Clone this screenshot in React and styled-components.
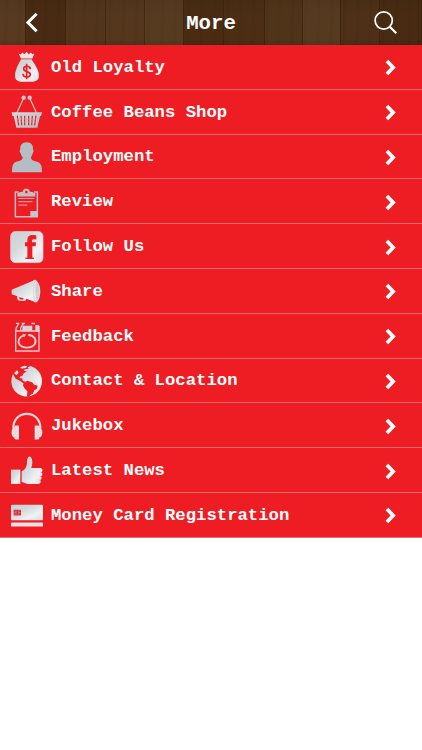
import React from 'react'
import styled, { createGlobalStyle } from 'styled-components'

const GlobalStyle = createGlobalStyle`
  body {
    margin: 0;
    background-color: #fff;
    font-family: 'Liberation Mono', monospace;
  }
`

const Screen = styled.div`
  width: 100%;
  min-height: 750px;
  background-color: #fff;
`

const Header = styled.header`
  display: grid;
  grid-template-columns: 62px 1fr 62px;
  align-items: center;
  height: 45px;
  background:
    linear-gradient(rgba(0, 0, 0, 0.05), transparent 30%, transparent 85%, rgba(0, 0, 0, 0.08)),
    repeating-linear-gradient(92deg, transparent 0 4px, rgba(0, 0, 0, 0.04) 7px, transparent 10px 13px),
    linear-gradient(
      90deg,
      #573a20 0 25px,
      #40240e 25px 26px, #482b12 26px 65px,
      #40240e 65px 66px, #52351b 66px 105px,
      #442910 105px 106px, #54371d 106px 144px,
      #442910 144px 145px, #573b20 145px 183px,
      #40240e 183px 184px, #4a2c13 184px 223px,
      #40240e 223px 224px, #4b2e14 224px 264px,
      #40240e 264px 265px, #50341a 265px 302px,
      #442910 302px 303px, #563a20 303px 340px,
      #40240e 340px 341px, #4d3017 341px 379px,
      #40240e 379px 380px, #482b12 380px 418px,
      #40240e 418px 419px, #482b12 419px
    );
`

const Title = styled.h1`
  margin: 3px 0 0;
  color: #fff;
  text-align: center;
  font-size: 20.7px;
  font-weight: 700;
  line-height: 24px;
`

const HeaderButton = styled.button`
  display: flex;
  justify-content: ${({ $end }) => ($end ? 'flex-end' : 'flex-start')};
  padding: 0 24px;
  border: 0;
  background: none;
  color: #fff;

  svg {
    flex: none;
  }
`

const Menu = styled.ul`
  margin: 0;
  padding: 0;
  list-style: none;
  background-color: #ee1d23;
`

const MenuItem = styled.li`
  display: flex;
  align-items: center;
  box-sizing: border-box;
  height: 44.8px;
  padding: 0 25px 0 10px;
  border-bottom: 1px solid #f5686b;
  cursor: pointer;
`

const Icon = styled.svg`
  flex: none;
  width: 34px;
  height: 36px;
  margin-top: 1px;
`

const Label = styled.span`
  flex: 1;
  margin: 2px 0 0 7px;
  color: #fff;
  font-size: 17.27px;
  font-weight: 700;
  line-height: 20px;
  white-space: nowrap;
`

const Chevron = styled.svg`
  flex: none;
  width: 12px;
  height: 17px;
  margin-top: 2px;
`

const Palette = styled.svg`
  display: block;
  width: 0;
  height: 0;
`

const RED = '#ee1d23'

const items = [
  {
    name: 'Old Loyalty',
    top: 15.6,
    icon: <>
      <path d="M56 29l6 3 5-6 6 5 7-7 6 7 7-5 4 5 6-2-6 15H63z" fill="#e8e4e6" />
      <path d="M63 46h32c3 8 22 29 22 50 0 12-9 18-24 18H69c-16 0-24-6-24-18 0-21 15-42 18-50z" fill="url(#silver)" />
      <path d="M91 76c0-12-20-11-20-1 0 11 20 6 20 17 0 11-22 10-22-2M80 60v46" fill="none" stroke={RED} strokeWidth="5" />
    </>,
  },
  {
    name: 'Coffee Beans Shop',
    top: 150,
    icon: <>
      <path d="M71 162L50 208M89 162l21 46" stroke="#d8c9cf" strokeWidth="3.4" />
      <circle cx="71" cy="161" r="6.5" fill="#c3c8cd" />
      <circle cx="89" cy="161" r="6.5" fill="#c3c8cd" />
      <path d="M35 205h91l-3 11h-3l-8 35H49l-8-35h-4z" fill="url(#steel)" />
      <path d="M52 215l4 29M63 215l2 29M74 215v29M86 215v29M97 215l-2 29M108 215l-4 29" stroke={RED} strokeWidth="3.6" />
      <path d="M48 225h65M50 234h60" stroke="#b9c2c8" strokeWidth="1.4" />
    </>,
  },
  {
    name: 'Employment',
    top: 14.4,
    icon: <path d="M80 24c14 0 20 9 19 22 3 2 2 8-1 11-1 7-4 9-5 12 0 8 5 10 16 13 12 3 17 10 17 32H36c0-22 4-29 15-32 12-3 17-5 17-13-2-3-5-6-6-12-4-3-4-9-1-11-1-13 5-22 19-22z" fill="#b4bdc4" />,
  },
  {
    name: 'Review',
    top: 148.8,
    icon: <>
      <path d="M56 173H46v74h66v-74h-10" fill="none" stroke="#c5bcc2" strokeWidth="4.5" />
      <path d="M52 186v-8c0-5 8-4 17-7 0-12 20-12 20 0 9 3 17 2 17 7v8z" fill="#c5bec4" />
      <circle cx="79" cy="173" r="4" fill={RED} />
      <path d="M55 192h48M55 202h42M55 212h27" stroke="#dbb9bf" strokeWidth="2.8" />
      <path d="M91 248v-18h22v18z" fill="#c4c7cc" />
    </>,
  },
  {
    name: 'Follow Us',
    top: 13.2,
    icon: <>
      <rect x="32" y="21" width="97" height="93" rx="14" fill="url(#silver)" stroke="#ead8dc" strokeWidth="2" />
      <path d="M82 102V65h-7V53h7v-6c0-14 9-18 27-14v12c-9-2-13-1-13 5v3h12l-1 12H97v37z" fill={RED} />
      <path d="M76 101h26" stroke={RED} strokeWidth="4" />
    </>,
  },
  {
    name: 'Share',
    top: 147.6,
    icon: <>
      <path d="M35 198l64-27c4-4 8-4 12 1 13 15 13 46 1 62-4 4-8 2-11-1l-22-8c-2 7-6 7-14 6-12-1-14-3-13-14l-17-6z" fill="url(#silver)" />
      <path d="M57 220l14 3-1 4c-8 0-13 0-13-7z" fill={RED} />
      <path d="M105 172c-6 16-6 45 1 62" fill="none" stroke="#e3b7be" strokeWidth="1.6" />
      <path d="M110 174c11 16 11 42 1 58-6-15-7-42-1-58z" fill="#cfcdd1" />
    </>,
  },
  {
    name: 'Feedback',
    top: 15,
    icon: <>
      <path d="M47 54h70v60H47z" fill="none" stroke="#ecc7cb" strokeWidth="4" />
      <path d="M48 54v-8l8-14M48 31h10M62 54v-9l8-13" fill="none" stroke="#e9c6ca" strokeWidth="4" />
      <path d="M68 38h29v16H66z" fill="#d3d4d9" />
      <path d="M65 29h10v5H65zM94 29h11v5H94z" fill="#e9c6ca" />
      <path d="M106 36h9l4 4v16h-13z" fill="#d6d4d8" />
      <path d="M72 67c-15 4-20 18-14 27 8 13 38 13 46 0 7-12 0-27-19-28" fill="none" stroke="#edd0d4" strokeWidth="5.5" />
      <path d="M67 63l11 1-5 9z" fill="#edd0d4" />
    </>,
  },
  {
    name: 'Contact & Location',
    top: 149.4,
    icon: <>
      <circle cx="80" cy="204" r="46" fill="url(#silver)" />
      <path d="M38 180l12-15 14-9 14-1 12 5-7 2 3 5-12 1-3 4 9 3-9 5-4 8-7 2-1 5 8 1 1 7 8 3-5 5-13-9-11-5-5-9z" fill={RED} />
      <path d="M60 162l14-4 8 1-4 5-12 3zM42 180l9-9 5 6-6 9z" fill="#dfe2e5" />
      <path d="M71 209l11-6 16 5 3 6 12 4-2 9-8 4-4 10-9 5-5 8-4-5 1-15-8-8-5-9z" fill={RED} />
      <path d="M94 203c9-1 18 5 20 13l-8-2-5-7z" fill="#dfe2e5" />
    </>,
  },
  {
    name: 'Jukebox',
    top: 16.8,
    icon: <>
      <path d="M40 78c-1-58 82-58 81 0" fill="none" stroke="#ead8dc" strokeWidth="6.5" />
      <path d="M47 69h10v42H47c-2 0-4-3-4-6-11-1-11-28 0-30 0-3 2-6 4-6zM104 69h10c3 0 4 3 4 6 12 1 12 29 0 30 0 3-1 6-4 6h-10z" fill="#e5dfe2" />
      <path d="M46 74v31M115 74v31" stroke="#efb7bd" strokeWidth="1" />
    </>,
  },
  {
    name: 'Latest News',
    top: 151.2,
    icon: <>
      <path d="M33 201h28v43H33z" fill="url(#silver)" />
      <path d="M65 206c10-3 15-14 16-24 0-5 1-18 6-20 7-1 10 8 10 18 0 7-3 13-3 16h25c9 0 11 8 5 13 5 4 4 9-1 12 3 5 2 8-2 11 3 8-1 12-9 12H86c-7 0-13-5-21-6z" fill="url(#silver)" />
      <path d="M121 209h5M120 221h5M118 232h4" stroke={RED} strokeWidth="1" />
    </>,
  },
  {
    name: 'Money Card Registration',
    top: 21.6,
    icon: <>
      <rect x="33" y="45" width="96" height="46" rx="3" fill="url(#silver)" />
      <rect x="41" y="60" width="22" height="17" rx="2" fill="#d8323c" />
      <path d="M48 61v15M56 61v15M42 68h6M56 68h6" stroke="#e58f95" strokeWidth="1.5" />
      <rect x="33" y="98" width="96" height="12" rx="2" fill="#e9e3e6" />
    </>,
  },
]

// shared by every row icon
const Gradients = () => (
  <Palette aria-hidden="true">
    <defs>
      <linearGradient id="silver" x1="0" y1="0" x2="1" y2="1">
        <stop offset="0" stopColor="#ccd0d5" />
        <stop offset="0.35" stopColor="#d2d8dc" />
        <stop offset="0.7" stopColor="#f0f1f3" />
        <stop offset="1" stopColor="#d9dde1" />
      </linearGradient>
      <linearGradient id="steel" x1="0" y1="0" x2="1" y2="1">
        <stop offset="0" stopColor="#d5dadd" />
        <stop offset="1" stopColor="#b2bbc2" />
      </linearGradient>
    </defs>
  </Palette>
)

const App = () => {
  return <Screen>
    <GlobalStyle />
    <Gradients />
    <Header>
      <HeaderButton aria-label="Back">
        <svg width="15" height="21" viewBox="0 0 15 21">
          <path d="M12.6 1.8L3.9 10.5l8.7 8.7" fill="none" stroke="currentColor" strokeWidth="3" />
        </svg>
      </HeaderButton>
      <Title>More</Title>
      <HeaderButton $end aria-label="Search">
        <svg width="24" height="24" viewBox="0 0 24 24">
          <circle cx="9.7" cy="9.5" r="8.6" fill="none" stroke="currentColor" strokeWidth="1.7" />
          <path d="M15.8 15.8l6.5 6.5" stroke="currentColor" strokeWidth="2.2" />
        </svg>
      </HeaderButton>
    </Header>
    <Menu>
      {items.map(({ name, top, icon }) => (
        <MenuItem key={name}>
          <Icon viewBox={`30 ${top} 102 108`}>{icon}</Icon>
          <Label>{name}</Label>
          <Chevron viewBox="0 0 12 17">
            <path d="M1.9 2l6.2 6.5L1.9 15" fill="none" stroke="#fff" strokeWidth="3.8" />
          </Chevron>
        </MenuItem>
      ))}
    </Menu>
  </Screen>
}

export default App
